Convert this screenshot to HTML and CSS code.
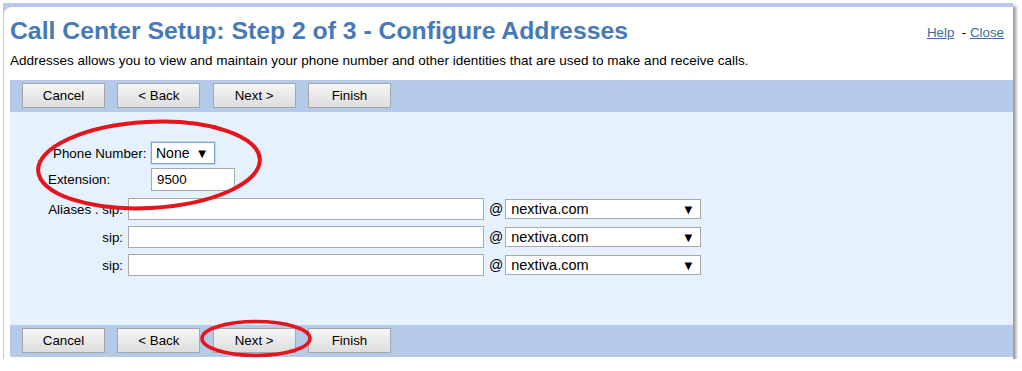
FILE: index.html
```html
<!DOCTYPE html>
<html lang="en">
<head>
    <meta charset="UTF-8">
    <title>Call Center Setup: Step 2 of 3 - Configure Addresses</title>
    <link rel="stylesheet" href="styles.css">
</head>
<body>
    <div class="frame">
        <div class="inner">
            <div class="header">
                <h1>Call Center Setup: Step 2 of 3 - Configure Addresses</h1>
                <div class="links"><a href="#">Help</a>&nbsp; - <a href="#">Close</a></div>
            </div>
            <p class="intro">Addresses allows you to view and maintain your phone number and other identities that are used to make and receive calls.</p>

            <div class="bar">
                <button>Cancel</button>
                <button>&lt; Back</button>
                <button>Next &gt;</button>
                <button>Finish</button>
            </div>

            <div class="content">
                <div class="numbers">
                    <label class="phone-label">Phone Number:</label>
                    <div class="select select-small focus"><span>None</span><span class="arrow">▼</span></div>
                    <label>Extension:</label>
                    <input class="ext" type="text" value="9500">
                </div>

                <div class="aliases">
                    <label>Aliases . sip:</label>
                    <input class="sip" type="text">
                    <span class="at">@</span>
                    <div class="select select-domain"><span>nextiva.com</span><span class="arrow">▼</span></div>

                    <label>sip:</label>
                    <input class="sip" type="text">
                    <span class="at">@</span>
                    <div class="select select-domain"><span>nextiva.com</span><span class="arrow">▼</span></div>

                    <label>sip:</label>
                    <input class="sip" type="text">
                    <span class="at">@</span>
                    <div class="select select-domain"><span>nextiva.com</span><span class="arrow">▼</span></div>
                </div>
            </div>

            <div class="bar">
                <button>Cancel</button>
                <button>&lt; Back</button>
                <button>Next &gt;</button>
                <button>Finish</button>
            </div>
        </div>
    </div>

    <!-- red annotation marks drawn over the screenshot -->
    <svg class="marks" width="1022" height="371" viewBox="0 0 1022 371">
        <ellipse cx="149" cy="165" rx="111" ry="43" transform="rotate(-3 149 165)" fill="none" stroke="#e4151c" stroke-width="4"/>
        <ellipse cx="256" cy="338.5" rx="54" ry="17" fill="none" stroke="#e4151c" stroke-width="3.5"/>
    </svg>
</body>
</html>
```

FILE: styles.css
```css
body {
    margin: 0;
    background: #fff;
    font-family: "Liberation Sans", Arial, sans-serif;
    color: #000;
}
.frame {
    margin: 3px 0 0 3px;
    width: 1010px;
    padding: 4px 0 0 1px;
    box-sizing: border-box;
    background: #b7cbe9;
    box-shadow: 3px 3px 3px rgba(0,0,0,0.4);
}
.inner {
    background: #fff;
    border-top-left-radius: 8px;
    padding: 0 0 2px 6px;
}
.header {
    display: flex;
    justify-content: space-between;
    align-items: flex-start;
    padding: 10px 9px 0 0;
}
h1 {
    margin: 0;
    font-size: 24.75px;
    line-height: 28px;
    color: #4679b5;
}
.links {
    font-size: 13.33px;
    margin-top: 8px;
}
.links a {
    color: #3b6ea8;
}
.intro {
    margin: 8px 0 12px;
    font-size: 13.5px;
    line-height: 15px;
}
.bar {
    display: flex;
    gap: 12.33px;
    height: 32px;
    padding: 3px 12px 0;
    box-sizing: border-box;
    background: #b5c9e9;
}
button {
    width: 83px;
    height: 25px;
    padding: 0;
    border: 1px solid #a6a6a6;
    background: linear-gradient(#f6f6f6, #dddddd);
    font-family: "Liberation Sans", Arial, sans-serif;
    font-size: 13.33px;
    color: #000;
}
.content {
    height: 213px;
    box-sizing: border-box;
    padding: 30px 0 0 38px;
    background: #e5f2fd;
    font-size: 13.33px;
}
label {
    align-self: center;
}
.numbers {
    display: grid;
    grid-template-columns: 103px auto;
    justify-content: start;
    row-gap: 4px;
    justify-items: start;
}
.phone-label {
    margin-left: 5px;
}
.aliases {
    display: grid;
    grid-template-columns: 75px 356px auto 196px;
    justify-content: start;
    column-gap: 5px;
    row-gap: 6px;
    margin-top: 7px;
}
.aliases label {
    justify-self: end;
}
input {
    box-sizing: border-box;
    height: 22px;
    border: 1px solid #a9a9a9;
    background: #fff;
    font-family: "Liberation Sans", Arial, sans-serif;
    font-size: 13.33px;
    padding: 0 5px;
}
.ext {
    width: 84px;
    height: 23px;
}
.sip {
    width: 356px;
}
.at {
    align-self: center;
    font-size: 14px;
    margin-right: -3px;
}
.select {
    display: flex;
    justify-content: space-between;
    align-items: center;
    box-sizing: border-box;
    height: 21px;
    border: 1px solid #a9a9a9;
    background: #fff;
    padding: 0 8px 0 4px;
}
.select-small {
    width: 64px;
    height: 22px;
    font-size: 14px;
}
.focus {
    border-color: #7ba3dd;
    box-shadow: 0 0 0 1px #c6daf4;
}
.select-domain {
    width: 196px;
    height: 20px;
    align-self: center;
    font-size: 14.5px;
    padding-left: 5px;
}
.arrow {
    font-family: "DejaVu Sans", sans-serif;
    font-size: 10px;
}
.marks {
    position: absolute;
    left: 0;
    top: 0;
    pointer-events: none;
}
```
